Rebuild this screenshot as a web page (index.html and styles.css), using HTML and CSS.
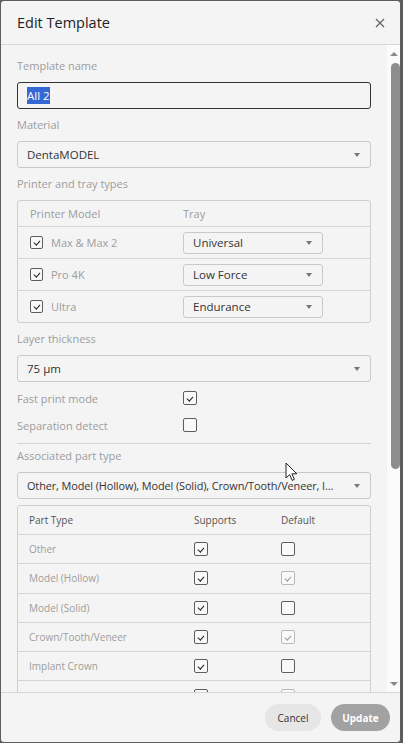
FILE: index.html
```html
<!DOCTYPE html>
<html>
<head>
  <meta charset="utf-8">
  <title>Edit Template</title>
  <link rel="stylesheet" href="styles.css">
</head>
<body>
  <div class="dialog">
    <header class="dlg-head">
      <h1>Edit Template</h1>
      <button class="close" title="Close">
        <svg width="10" height="10" viewBox="0 0 10 10"><path d="M1 1L9 9M9 1L1 9" stroke="#666" stroke-width="1.3" fill="none"/></svg>
      </button>
    </header>

    <div class="dlg-body">
      <div class="pane">
        <label class="fld-label">Template name</label>
        <div class="text-input"><span class="sel">All 2</span></div>

        <label class="fld-label">Material</label>
        <div class="select"><span class="val">DentaMODEL</span><i class="caret"></i></div>

        <label class="fld-label">Printer and tray types</label>
        <div class="grid printers">
          <div class="row head"><span class="c-name">Printer Model</span><span>Tray</span></div>
          <div class="row">
            <span class="c-name"><i class="chk on"></i>Max &amp; Max 2</span>
            <div class="select small"><span class="val">Universal</span><i class="caret"></i></div>
          </div>
          <div class="row">
            <span class="c-name"><i class="chk on"></i>Pro 4K</span>
            <div class="select small"><span class="val">Low Force</span><i class="caret"></i></div>
          </div>
          <div class="row">
            <span class="c-name"><i class="chk on"></i>Ultra</span>
            <div class="select small"><span class="val">Endurance</span><i class="caret"></i></div>
          </div>
        </div>

        <label class="fld-label">Layer thickness</label>
        <div class="select"><span class="val">75 µm</span><i class="caret"></i></div>

        <div class="opt"><span>Fast print mode</span><i class="chk big on"></i></div>
        <div class="opt"><span>Separation detect</span><i class="chk big"></i></div>

        <hr class="sep">

        <label class="fld-label">Associated part type</label>
        <div class="select multi"><span class="val">Other, Model (Hollow), Model (Solid), Crown/Tooth/Veneer, I...</span><i class="caret"></i></div>

        <div class="grid parts">
          <div class="row head"><span class="cell">Part Type</span><span class="cell">Supports</span><span class="cell">Default</span></div>
          <div class="row"><span class="cell">Other</span><span class="cell"><i class="chk big on"></i></span><span class="cell"><i class="chk big"></i></span></div>
          <div class="row"><span class="cell">Model (Hollow)</span><span class="cell"><i class="chk big on"></i></span><span class="cell"><i class="chk big on off"></i></span></div>
          <div class="row"><span class="cell">Model (Solid)</span><span class="cell"><i class="chk big on"></i></span><span class="cell"><i class="chk big"></i></span></div>
          <div class="row"><span class="cell">Crown/Tooth/Veneer</span><span class="cell"><i class="chk big on"></i></span><span class="cell"><i class="chk big on off"></i></span></div>
          <div class="row"><span class="cell">Implant Crown</span><span class="cell"><i class="chk big on"></i></span><span class="cell"><i class="chk big"></i></span></div>
          <div class="row"><span class="cell"></span><span class="cell"><i class="chk big"></i></span><span class="cell"><i class="chk big off"></i></span></div>
        </div>
      </div>

      <div class="scrollbar">
        <span class="sb-btn up"></span>
        <span class="sb-thumb"></span>
        <span class="sb-track"></span>
        <span class="sb-btn down"></span>
      </div>
    </div>

    <footer class="dlg-foot">
      <button class="btn cancel">Cancel</button>
      <button class="btn primary" disabled>Update</button>
    </footer>
  </div>

  <svg class="pointer" width="14" height="20" viewBox="0 0 14 20">
    <path d="M1 1V16L4.6 12.6L7.2 18.4L9.4 17.4L6.9 11.8H11.8Z" fill="#fff" stroke="#222" stroke-width="1" stroke-linejoin="round"/>
  </svg>
</body>
</html>
```

FILE: styles.css
```css
html, body { margin: 0; height: 100%; }
body { background: #5b5d5f; font-family: "Open Sans", "Liberation Sans", sans-serif; overflow: hidden; }

.dialog { margin: 1px; width: 399px; height: 741px; background: #f4f4f4; border-radius: 3px;
          display: flex; flex-direction: column; }

/* header */
.dlg-head { height: 43px; border-bottom: 1px solid #d6d6d6; display: flex; align-items: center;
            padding: 0 16px; }
.dlg-head h1 { flex: 1; margin: 0; font-size: 14.5px; font-weight: 400; color: #222; }
.close { border: 0; background: none; padding: 0; width: 14px; height: 14px; margin-right: -3px;
         display: flex; align-items: center; justify-content: center; }

/* body + scroll column */
.dlg-body { flex: 1; min-height: 0; display: flex; }
.pane { flex: 1; overflow: hidden; padding: 13px 16px 0 16px; }

.scrollbar { width: 13px; background: #fbfbfb; display: flex; flex-direction: column; align-items: center; }
.sb-btn { height: 16px; width: 100%; position: relative; flex: none; }
.sb-btn::after { content: ""; position: absolute; left: 3px; border-left: 4px solid transparent; border-right: 4px solid transparent; }
.sb-btn.up::after { top: 7px; border-bottom: 4px solid #8a8a8a; }
.sb-btn.down::after { bottom: 6px; border-top: 4px solid #8a8a8a; }
.sb-thumb { width: 9px; height: 406px; margin: 2px 0 0 3px; background: #8d8d8d; border-radius: 5px; flex: none; }
.sb-track { flex: 1; }

/* form fields */
.fld-label { display: block; height: 16px; line-height: 16px; font-size: 11px; color: #9d9d9d; margin-bottom: 8px; }
.text-input, .select { height: 25px; border: 1px solid #c9c9c9; border-radius: 3px; background: #f4f4f4;
                       display: flex; align-items: center; padding: 0 9px; font-size: 11.5px; color: #333;
                       margin-bottom: 8px; white-space: nowrap; }
.text-input { border-color: #333; }
.sel { background: #3568d4; color: #fff; padding: 1px 0; }
.val { flex: 1; min-width: 0; overflow: hidden; }
.caret { width: 0; height: 0; border-left: 3.5px solid transparent; border-right: 3.5px solid transparent;
         border-top: 4px solid #777; margin: 0 1px 0 6px; flex: none; }
.select.multi { font-size: 10.9px; letter-spacing: -0.1px; margin-bottom: 6px; }

.select.small { height: 20px; width: 120px; font-size: 11.5px; margin: 0; padding: 0 9px; }

/* tables */
.grid { border: 1px solid #cfcfcf; border-radius: 3px; margin-bottom: 8px; }
.row { display: flex; align-items: center; border-top: 1px solid #d4d4d4; font-size: 11px; color: #9d9d9d; }
.row:first-child { border-top: 0; }

.printers .row { height: 31px; padding-left: 12px; }
.printers .row.head { height: 25px; }
.printers .c-name { width: 153px; display: flex; align-items: center; }
.printers .chk { margin-right: 8px; }

.parts { margin-bottom: 0; }
.parts .row { height: 28.3px; padding-left: 11px; font-size: 10px; }
.parts .row.head { height: 28px; color: #555; }
.parts .cell { display: flex; align-items: center; }
.parts .cell:nth-child(1) { width: 165px; }
.parts .cell:nth-child(2) { width: 87px; }

/* checkboxes */
.chk { display: inline-block; width: 11px; height: 11px; border: 1px solid #5d5d5d; border-radius: 2px;
       background: #f9f9f9; flex: none; position: relative; box-sizing: content-box; }
.chk.big { width: 12px; height: 12px; }
.chk.on::after { content: ""; position: absolute; left: 3.5px; top: 2px; width: 2.5px; height: 5px;
                 border: solid #222; border-width: 0 1.3px 1.3px 0; transform: rotate(42deg); }
.chk.big.on::after { left: 4px; top: 2.5px; }
.chk.off { border-color: #b9b9b9; }
.chk.off::after { border-color: #9a9a9a; }

.opt { display: flex; align-items: center; height: 16px; margin-bottom: 11px; font-size: 11px; color: #9d9d9d; }
.opt span { width: 166px; }

.sep { border: 0; border-top: 1px solid #d4d4d4; margin: -1px 0 4px; }

/* footer */
.dlg-foot { height: 49px; border-top: 1px solid #d6d6d6; display: flex; align-items: center; justify-content: flex-end;
            gap: 10px; padding-right: 10px; }
.btn { height: 27px; border: 0; border-radius: 14px; font-family: inherit; font-size: 10px; padding: 0; }
.btn.cancel { width: 56px; background: #e6e6e6; color: #333; }
.btn.primary { width: 59px; background: #a2a2a2; color: #fff; font-weight: 700; }

.pointer { position: absolute; left: 285px; top: 462px; }
```
